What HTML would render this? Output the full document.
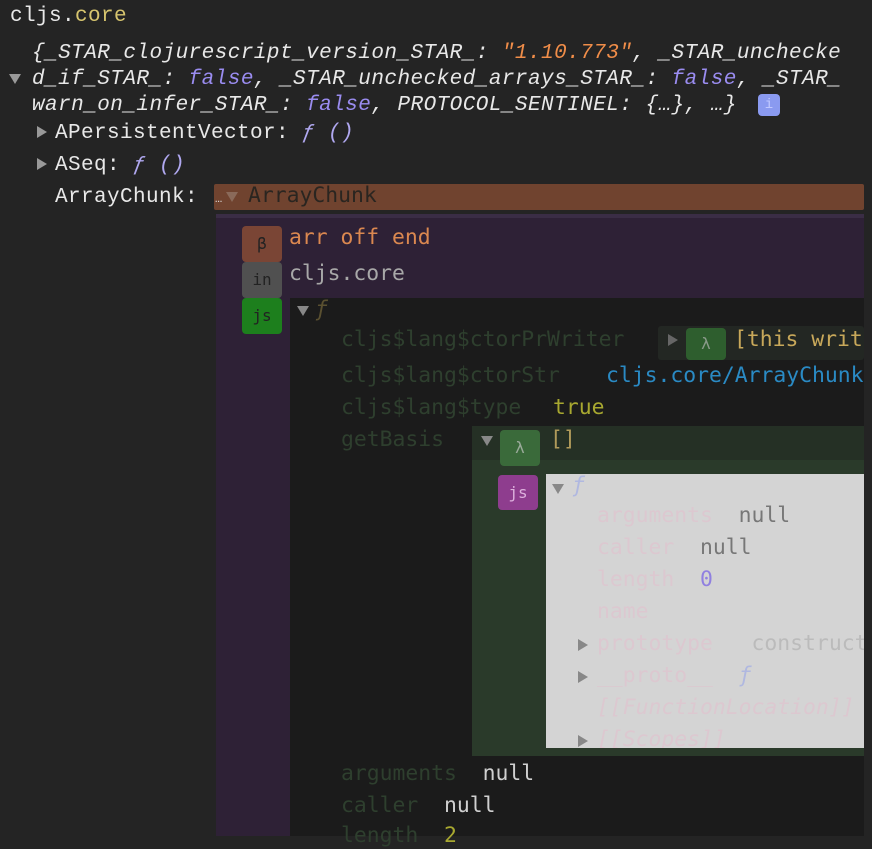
<!DOCTYPE html>
<html><head><meta charset="utf-8"><style>
body{margin:0;width:872px;height:836px;overflow:hidden;background:#242424;position:relative;font-family:"Liberation Mono",monospace;font-size:21px;color:#e8e8e8}
.a{position:absolute;white-space:pre;line-height:26px}
.d{font-family:"DejaVu Sans Mono",monospace;font-size:21.4px}
.b{position:absolute}
.i{font-style:italic}
.tri{position:absolute;width:0;height:0}
.dn{border-left:6px solid transparent;border-right:6px solid transparent;border-top:10px solid #999}
.rt{border-top:6px solid transparent;border-bottom:6px solid transparent;border-left:10px solid #999}
.badge{position:absolute;width:40px;height:36px;border-radius:4px;text-align:center;line-height:36px;font-family:"DejaVu Sans Mono",monospace;font-size:16px;color:#222}
</style></head><body>
<div class="a" style="left:10px;top:4px;letter-spacing:0.4px">cljs.<span style="color:#d6c46e">core</span></div>
<div class="a i" style="left:32px;top:41px;letter-spacing:0.45px">{_STAR_clojurescript_version_STAR_: <span style="color:#f08d49">"1.10.773"</span>, _STAR_unchecke</div>
<div class="a i" style="left:32px;top:67px;letter-spacing:0.45px">d_if_STAR_: <span style="color:#9a8cf0">false</span>, _STAR_unchecked_arrays_STAR_: <span style="color:#9a8cf0">false</span>, _STAR_</div>
<div class="a i" style="left:32px;top:93px;letter-spacing:0.45px">warn_on_infer_STAR_: <span style="color:#9a8cf0">false</span>, PROTOCOL_SENTINEL: {…}, …}</div>
<div class="b" style="left:758px;top:94px;width:22px;height:22px;border-radius:4px;background:#8a9af0;color:#c0c8ff;font-size:14px;text-align:center;line-height:22px">i</div>
<div class="tri dn" style="left:9px;top:74px"></div>
<div class="tri rt" style="left:37px;top:126px"></div>
<div class="a" style="left:55px;top:121px;letter-spacing:0.4px">APersistentVector: <span class="i" style="color:#b0a8f0">ƒ ()</span></div>
<div class="tri rt" style="left:37px;top:158px"></div>
<div class="a" style="left:55px;top:153px;letter-spacing:0.4px">ASeq: <span class="i" style="color:#b0a8f0">ƒ ()</span></div>
<div class="a" style="left:55px;top:185px;letter-spacing:0.4px">ArrayChunk:</div>

<div class="b" style="left:214px;top:184px;width:650px;height:26px;background:#70432f;border-radius:2px"></div>
<div class="a" style="left:215px;top:186px;font-size:12px;color:#ddd">…</div>
<div class="tri dn" style="left:226px;top:192px;border-top-color:#8a6a5a"></div>
<div class="a d" style="left:248px;top:183px;color:#2a2520">ArrayChunk</div>

<div class="b" style="left:216px;top:214px;width:648px;height:622px;background:#2e2136"></div>
<div class="b" style="left:216px;top:214px;width:648px;height:4px;background:#3a2d45"></div>
<div class="badge" style="left:242px;top:226px;background:#7a4535">β</div>
<div class="a d" style="left:289px;top:225px;color:#db8850">arr off end</div>
<div class="badge" style="left:242px;top:262px;background:#505050">in</div>
<div class="a d" style="left:289px;top:261px;color:#a8a8a8">cljs.core</div>
<div class="badge" style="left:242px;top:298px;background:#1d7f1d">js</div>

<div class="b" style="left:290px;top:298px;width:574px;height:538px;background:#1b1b1b"></div>
<div class="tri dn" style="left:297px;top:306px;border-top-color:#888"></div>
<div class="a d i" style="left:315px;top:297px;color:#5a5030">ƒ</div>
<div class="a d" style="left:341px;top:327px;color:#2e3f2e">cljs$lang$ctorPrWriter</div>
<div class="b" style="left:658px;top:326px;width:206px;height:34px;background:#232723;border-radius:3px"></div>
<div class="tri rt" style="left:668px;top:334px;border-left-color:#666"></div>
<div class="badge" style="left:686px;top:328px;background:#2e5e2e;color:#8a9a8a;height:32px;line-height:32px">λ</div>
<div class="a d" style="left:734px;top:327px;color:#c8a85a">[this writ</div>
<div class="a d" style="left:341px;top:363px;color:#2e3f2e">cljs$lang$ctorStr</div>
<div class="a d" style="left:606px;top:363px;color:#2a8ac4">cljs.core/ArrayChunk</div>
<div class="a d" style="left:341px;top:395px;color:#2e3f2e">cljs$lang$type</div>
<div class="a d" style="left:553px;top:395px;color:#a8a830">true</div>
<div class="a d" style="left:341px;top:427px;color:#2e3f2e">getBasis</div>

<div class="b" style="left:472px;top:426px;width:392px;height:330px;background:#2a3a2a"></div>
<div class="b" style="left:472px;top:426px;width:392px;height:34px;background:#253025"></div>
<div class="tri dn" style="left:481px;top:436px;border-top-color:#888"></div>
<div class="badge" style="left:500px;top:430px;background:#3a6a3a;color:#9aaa9a">λ</div>
<div class="a d" style="left:550px;top:427px;color:#b09a5a">[]</div>
<div class="badge" style="left:498px;top:475px;background:#8e3d8e;color:#ddb0dd;height:35px">js</div>

<div class="b" style="left:546px;top:474px;width:318px;height:274px;background:#d4d4d4;overflow:hidden">
<div class="tri dn" style="left:6px;top:10px;border-top-color:#888"></div>
<div class="a d i" style="left:26px;top:-1px;color:#b0b8e0">ƒ</div>
<div class="a d" style="left:51px;top:29px;color:#dcc8d0">arguments  <span style="color:#777">null</span></div>
<div class="a d" style="left:51px;top:61px;color:#dcc8d0">caller  <span style="color:#777">null</span></div>
<div class="a d" style="left:51px;top:93px;color:#dcc8d0">length  <span style="color:#9080e0">0</span></div>
<div class="a d" style="left:51px;top:125px;color:#dcc8d0">name</div>
<div class="tri rt" style="left:32px;top:165px;border-left-color:#888"></div>
<div class="a d" style="left:51px;top:157px;color:#dcc8d0">prototype   <span style="color:#bbb">construct</span></div>
<div class="tri rt" style="left:32px;top:197px;border-left-color:#888"></div>
<div class="a d" style="left:51px;top:189px;color:#dcc8d0">__proto__  <span class="i" style="color:#b0b8e0">ƒ</span></div>
<div class="a d i" style="left:51px;top:221px;color:#dcc8d0">[[FunctionLocation]]</div>
<div class="tri rt" style="left:32px;top:261px;border-left-color:#888"></div>
<div class="a d i" style="left:51px;top:253px;color:#dcc8d0">[[Scopes]]</div>
</div>

<div class="a d" style="left:341px;top:761px;color:#2e3f2e">arguments  <span style="color:#d0d0d0">null</span></div>
<div class="a d" style="left:341px;top:793px;color:#2e3f2e">caller  <span style="color:#d0d0d0">null</span></div>
<div class="a d" style="left:341px;top:823px;color:#2e3f2e">length  <span style="color:#a8a830">2</span></div>
</body></html>
